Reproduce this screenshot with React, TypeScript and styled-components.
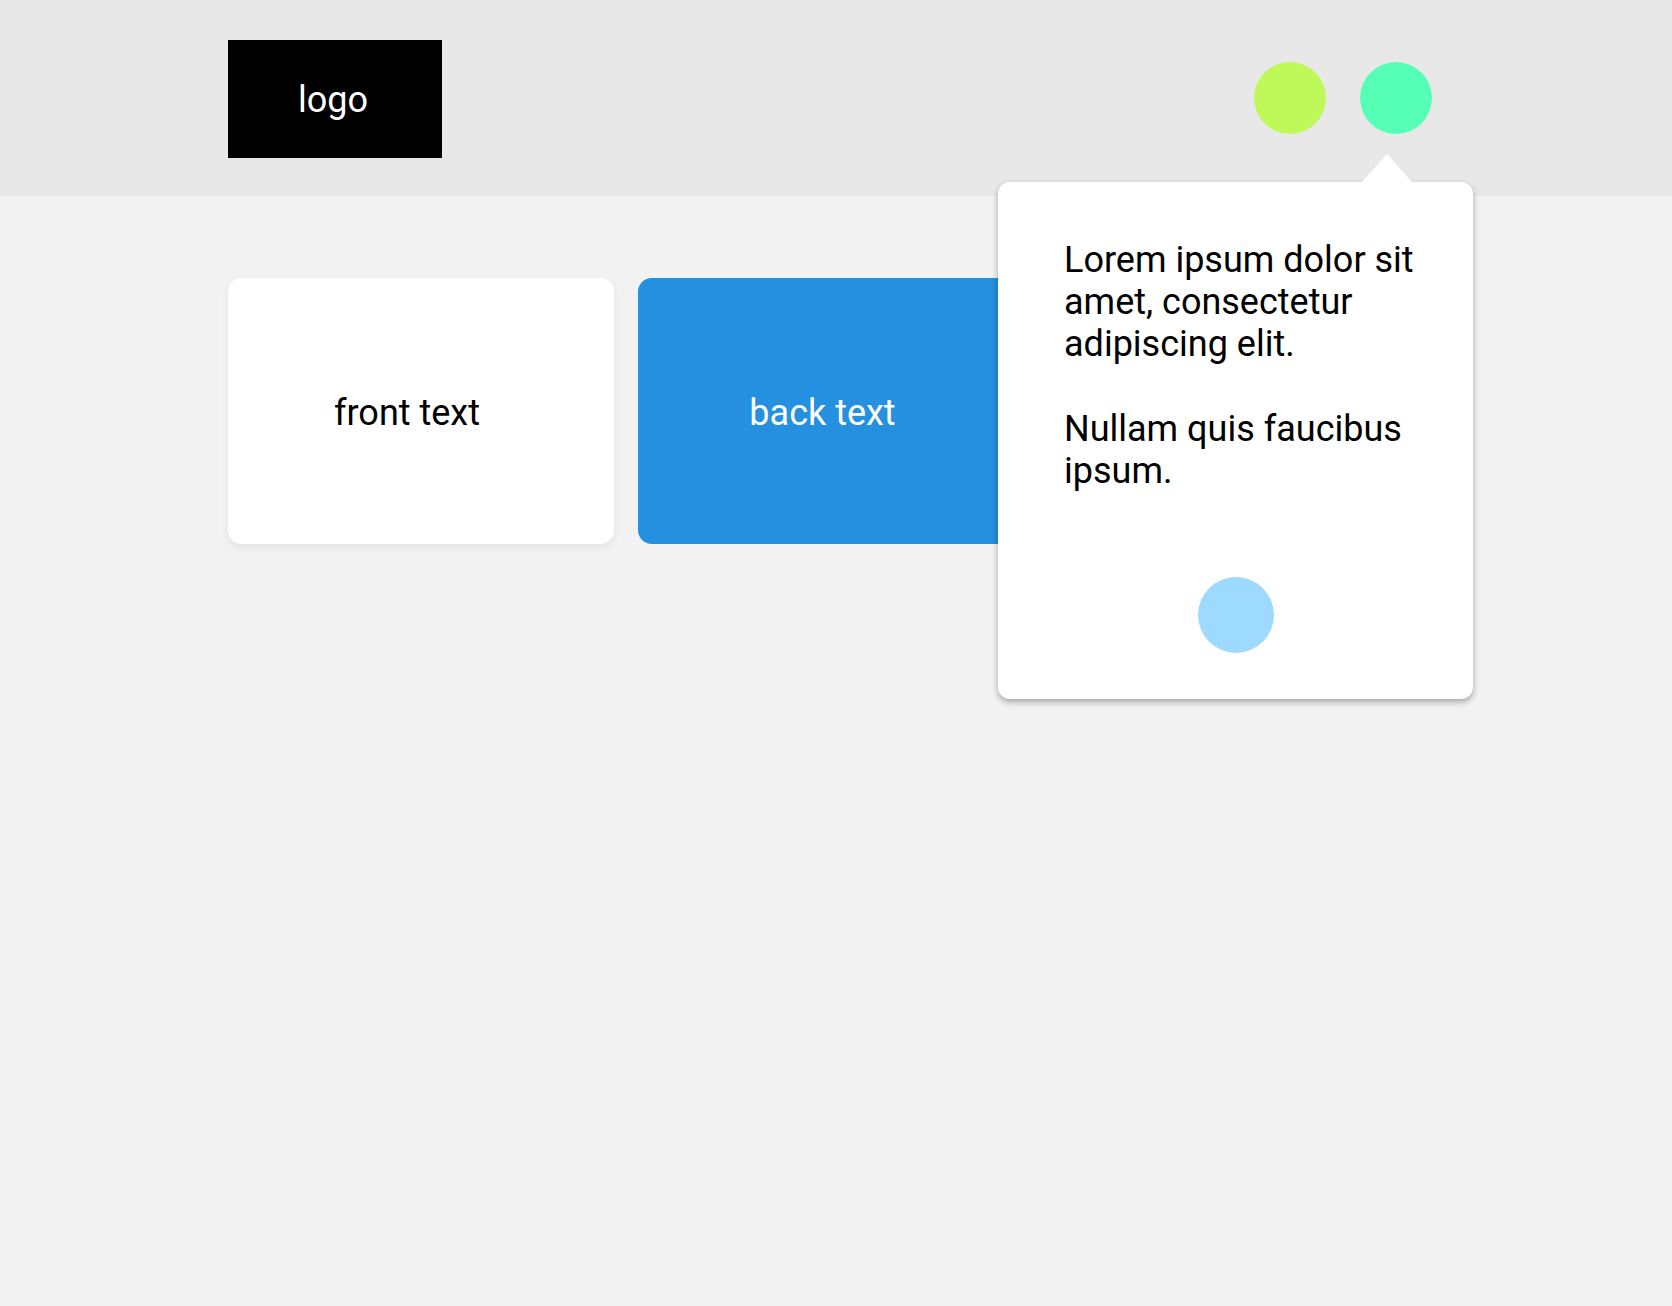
import React from "react";
import styled, { createGlobalStyle } from "styled-components";

const GlobalStyle = createGlobalStyle`
  html, body {
    margin: 0;
    padding: 0;
    background: #f2f2f2;
    font-family: Roboto, "Liberation Sans", Arial, sans-serif;
  }
  #root {
    min-height: 100vh;
  }
`;

const Page = styled.div`
  min-height: 100vh;
  background: #f2f2f2;
  font-family: Roboto, "Liberation Sans", Arial, sans-serif;
`;

const Header = styled.header`
  height: 196px;
  background: #e8e8e8;
  display: flex;
  align-items: center;
  justify-content: space-between;
  padding: 0 240px 0 228px;
  box-sizing: border-box;
`;

const Logo = styled.div`
  width: 214px;
  height: 118px;
  margin-top: 2px;
  background: #000;
  color: #fff;
  display: flex;
  align-items: center;
  justify-content: center;
  font-size: 36px;
  padding: 2px 4px 0 0;
  box-sizing: border-box;
`;

const Actions = styled.div`
  display: flex;
  align-items: center;
  gap: 34px;
`;

const Anchor = styled.div`
  position: relative;
`;

const Dot = styled.div<{ $color: string; $size?: number }>`
  width: ${(p) => p.$size ?? 72}px;
  height: ${(p) => p.$size ?? 72}px;
  border-radius: 50%;
  background: ${(p) => p.$color};
`;

const Popover = styled.div`
  position: absolute;
  top: calc(100% + 48px);
  right: -41px;
  width: 475px;
  height: 517px;
  box-sizing: border-box;
  background: #fff;
  border-radius: 12px;
  box-shadow: 0 3px 6px rgba(0, 0, 0, 0.32);
  padding: 57px 30px 46px 66px;
  display: flex;
  flex-direction: column;
  z-index: 10;

  &::before {
    content: "";
    position: absolute;
    top: -28px;
    left: 364px;
    width: 50px;
    height: 28px;
    background: #fff;
    clip-path: polygon(50% 0, 100% 100%, 0 100%);
  }
`;

const PopText = styled.p`
  margin: 0;
  font-size: 36px;
  line-height: 42px;
  color: #000;

  & + & {
    margin-top: 43px;
  }
`;

const PopFooter = styled.div`
  margin-top: auto;
  display: flex;
  justify-content: center;
  margin-left: -36px;
`;

const Main = styled.main`
  padding: 82px 0 0 228px;
`;

const CardRow = styled.div`
  display: flex;
  gap: 24px;
`;

const Card = styled.div<{ $variant: "front" | "back"; $nudge: number }>`
  width: 386px;
  height: 266px;
  box-sizing: border-box;
  border-radius: 14px;
  display: flex;
  align-items: center;
  justify-content: center;
  padding-right: ${(p) => p.$nudge}px;
  padding-top: 4px;
  font-size: 36px;
  background: ${(p) => (p.$variant === "front" ? "#ffffff" : "#2490df")};
  color: ${(p) => (p.$variant === "front" ? "#000" : "#fff")};
  box-shadow: ${(p) =>
    p.$variant === "front" ? "0 4px 10px rgba(0,0,0,0.06)" : "none"};
`;

export default function App() {
  return (
    <Page>
      <GlobalStyle />
      <Header>
        <Logo>logo</Logo>
        <Actions>
          <Dot $color="#bef959" />
          <Anchor>
            <Dot $color="#55ffb6" />
            <Popover>
              <PopText>Lorem ipsum dolor sit amet, consectetur adipiscing elit.</PopText>
              <PopText>Nullam quis faucibus ipsum.</PopText>
              <PopFooter>
                <Dot $color="#9ed9ff" $size={76} />
              </PopFooter>
            </Popover>
          </Anchor>
        </Actions>
      </Header>
      <Main>
        <CardRow>
          <Card $variant="front" $nudge={28}>front text</Card>
          <Card $variant="back" $nudge={17}>back text</Card>
        </CardRow>
      </Main>
    </Page>
  );
}
